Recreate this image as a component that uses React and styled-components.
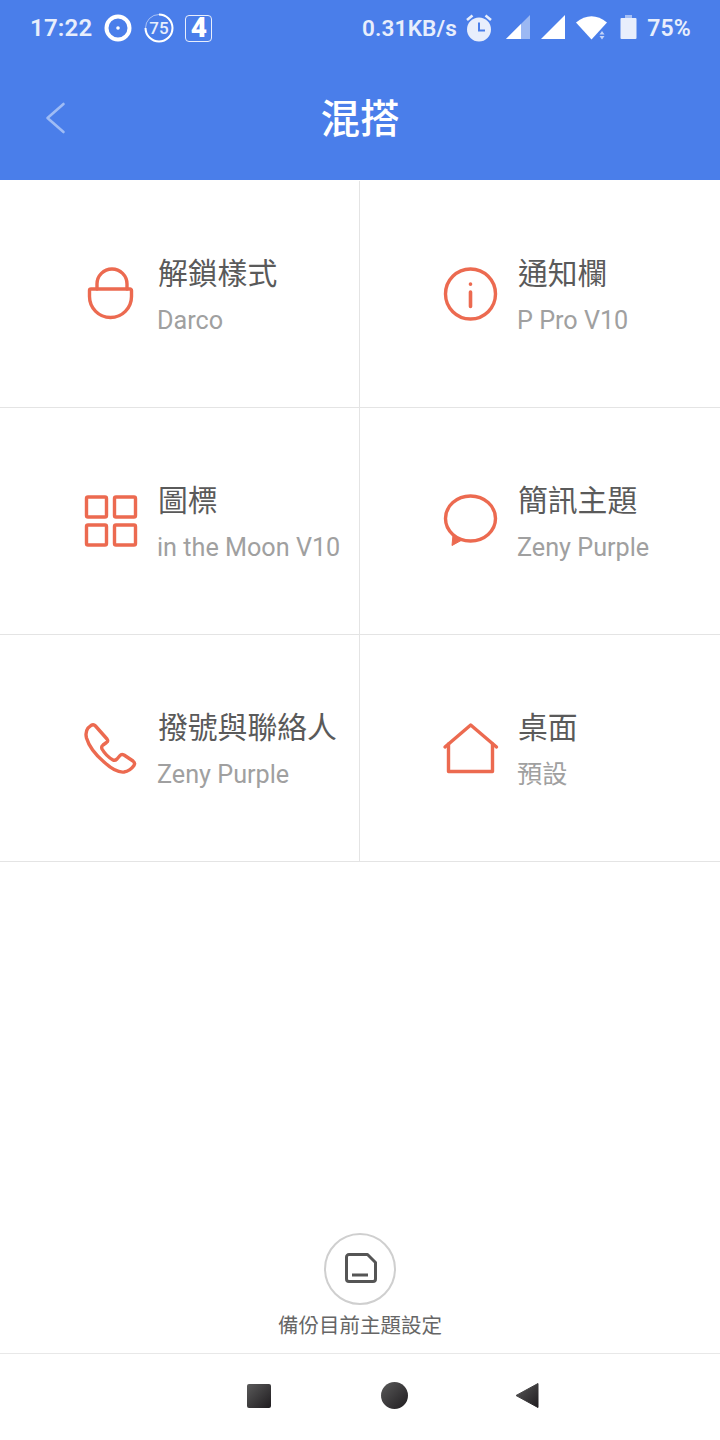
import styled, { createGlobalStyle } from "styled-components";

const GlobalStyle = createGlobalStyle`
  html, body {
    margin: 0;
    padding: 0;
    background: #fff;
  }
`;

const Page = styled.div`
  display: flex;
  flex-direction: column;
  width: 720px;
  height: 1440px;
  overflow: hidden;
  background: #fff;
  font-family: Roboto, "Noto Sans CJK TC", sans-serif;
`;

const Header = styled.header`
  height: 180px;
  background: #4a7eea;
  color: #fff;
`;

const StatusBar = styled.div`
  display: flex;
  justify-content: space-between;
  align-items: center;
  height: 56px;
  padding: 0 29px 0 30px;
  color: #e8eefc;
  font-weight: 600;
`;

const StatusGroup = styled.div`
  display: flex;
  align-items: center;
  gap: ${(p) => p.$gap}px;
`;

const StatusText = styled.span`
  margin-right: ${(p) => p.$pull || 0}px;
  font-size: ${(p) => p.$size}px;
  letter-spacing: 0.2px;
`;

const NumberBox = styled.span`
  display: flex;
  align-items: center;
  justify-content: center;
  box-sizing: border-box;
  width: 27px;
  height: 27px;
  margin-left: -1px;
  border: 1.5px solid #e8eefc;
  border-radius: 4px;
  font-size: 28px;
  font-weight: 900;
  line-height: 1;
  color: #fff;
`;

const TitleBar = styled.div`
  display: grid;
  grid-template-columns: 1fr auto 1fr;
  align-items: center;
  height: 124px;
  padding-left: 44px;
`;

const Title = styled.h1`
  margin: 0 0 5px -44px;
  font-family: "Noto Sans CJK TC", sans-serif;
  font-size: 39.5px;
  font-weight: 500;
  line-height: 1;
`;

const Grid = styled.div`
  display: grid;
  grid-template-columns: 360px 360px;
  grid-auto-rows: 227px;
  padding-top: 1px;
`;

const Cell = styled.div`
  display: flex;
  align-items: center;
  gap: 18px;
  box-sizing: border-box;
  padding-left: 80px;
  border-bottom: 1px solid #e4e4e4;
  border-right: ${(p) => (p.$left ? "1px solid #e4e4e4" : "none")};
`;

const CellText = styled.div`
  display: flex;
  flex-direction: column;
  gap: 13px;
  padding-top: 2px;
  white-space: nowrap;
`;

const CellTitle = styled.div`
  font-family: "Noto Sans CJK TC", sans-serif;
  font-size: 29.8px;
  line-height: 38px;
  color: #5a5a5a;
`;

const CellSub = styled.div`
  margin-left: -1px;
  font-family: Roboto, "Noto Sans CJK TC", sans-serif;
  font-size: 25.2px;
  line-height: 36px;
  color: #a0a0a0;
`;

const Backup = styled.div`
  display: flex;
  flex-direction: column;
  align-items: center;
  gap: 4px;
  margin-top: auto;
  padding-bottom: 14px;
`;

const BackupButton = styled.button`
  display: flex;
  align-items: center;
  justify-content: center;
  box-sizing: border-box;
  width: 72px;
  height: 72px;
  padding: 0;
  border: 2px solid #cfcfcf;
  border-radius: 50%;
  background: #fff;
`;

const BackupLabel = styled.div`
  font-family: "Noto Sans CJK TC", sans-serif;
  font-size: 20.5px;
  line-height: 30px;
  color: #666;
`;

const NavBar = styled.nav`
  display: grid;
  grid-template-columns: repeat(3, 134px);
  align-items: center;
  box-sizing: border-box;
  height: 87px;
  padding: 0 0 3px 247px;
  border-top: 1px solid #e8e8e8;
`;

const LineIcon = styled.svg`
  flex: none;
  width: 60px;
  height: 60px;
  fill: none;
  stroke: #ec6a50;
  stroke-width: 3.4;
  stroke-linecap: round;
  stroke-linejoin: round;
`;

const LockIcon = () => (
  <LineIcon viewBox="0 0 60 60">
    <path d="M17 25V20A15 15 0 0 1 47 20V25" />
    <path d="M11 25H50A1.5 1.5 0 0 1 51.5 26.5V32.5A21 21 0 0 1 30.5 53.5A21 21 0 0 1 9.5 32.5V26.5A1.5 1.5 0 0 1 11 25Z" />
  </LineIcon>
);

const InfoIcon = () => (
  <LineIcon viewBox="0 0 60 60">
    <circle cx="30.5" cy="30" r="25" />
    <path d="M30.5 20V20.2M30.5 28V42.5" strokeWidth="3.6" />
  </LineIcon>
);

const GridIcon = () => (
  <LineIcon viewBox="0 0 60 60">
    <rect x="6.5" y="6" width="20" height="20" rx="1.5" />
    <rect x="34.5" y="6" width="21" height="20" rx="1.5" />
    <rect x="6.5" y="34" width="20" height="20" rx="1.5" />
    <rect x="34.5" y="34" width="21" height="20" rx="1.5" />
  </LineIcon>
);

const BubbleIcon = () => (
  <LineIcon viewBox="0 0 60 60">
    <ellipse cx="30.5" cy="27.5" rx="25" ry="22.5" />
    <path d="M13 44L12 54.5L22 49Z" fill="#ec6a50" strokeWidth="1" />
  </LineIcon>
);

const PhoneIcon = () => (
  <LineIcon viewBox="0 0 60 60">
    <path d="M8 10L11 7.5Q13.5 5.8 15.5 8L27 21Q28.5 23 26.5 24.5L23 27Q21 28.5 22 31Q26 38 33 42Q35 43 37 41L40 37.5Q41.5 35.8 44 37L53 43Q55.5 45 54 47.5Q50 53 44 54Q36 55 24 44Q10 32 6.5 20Q5 14 8 10Z" />
  </LineIcon>
);

const HomeIcon = () => (
  <LineIcon viewBox="0 0 60 60">
    <path d="M5 29L30.7 7L56.5 29" />
    <path d="M8.5 26V53.5H52.5V26" />
  </LineIcon>
);

const TargetIcon = () => (
  <svg width="28" height="28" viewBox="0 0 28 28">
    <circle cx="14" cy="14" r="11.5" fill="none" stroke="#fff" strokeWidth="4" />
    <circle cx="14" cy="14" r="1.8" fill="#fff" />
  </svg>
);

const RingIcon = () => (
  <svg width="30" height="30" viewBox="0 0 30 30">
    <circle cx="15" cy="15" r="13.5" fill="none" stroke="#e8eefc" strokeWidth="1" opacity="0.6" />
    <path d="M15 1.5A13.5 13.5 0 1 1 1.5 15" fill="none" stroke="#fff" strokeWidth="2" />
    <text x="15" y="21" textAnchor="middle" fontSize="17" fontFamily="Roboto" fontWeight="500" fill="#e8eefc">
      75
    </text>
  </svg>
);

const AlarmIcon = () => (
  <svg width="31" height="30" viewBox="0 0 31 30">
    <circle cx="14" cy="16.5" r="12" fill="#e8eefc" />
    <path d="M14 9.5V17.5H20" fill="none" stroke="#4a7eea" strokeWidth="2" />
    <path d="M2 7L7.5 2.5M26 7L20.5 2.5" stroke="#e8eefc" strokeWidth="2.6" />
  </svg>
);

const SignalIcon = ({ weak }) => (
  <svg width="25" height="26" viewBox="0 0 25 26">
    <path d="M0 24L24 0V24Z" fill="#fff" opacity={weak ? 0.45 : 1} />
    {weak && <path d="M0 24L15 9V24Z" fill="#fff" />}
  </svg>
);

const WifiIcon = () => (
  <svg width="34" height="26" viewBox="0 0 34 26">
    <path d="M0 7.5Q15.5 -5 31 7.5L15.5 24.5Z" fill="#fff" />
    <path d="M26 16L28.5 19.5H23.5ZM26 24.5L23.5 21H28.5Z" fill="#c4d4f8" />
  </svg>
);

const BatteryIcon = () => (
  <svg width="17" height="26" viewBox="0 0 17 26">
    <path d="M5 0H12V3H5Z" fill="#fff" opacity="0.5" />
    <rect x="0.5" y="3" width="16" height="21" rx="1" fill="#e8eefc" />
  </svg>
);

const BackIcon = () => (
  <svg width="22" height="32" viewBox="0 0 22 32">
    <path d="M19.5 2L3.5 16L19.5 30" fill="none" stroke="#9fbcf5" strokeWidth="2.6" strokeLinecap="round" strokeLinejoin="round" />
  </svg>
);

const SimIcon = () => (
  <svg width="36" height="36" viewBox="0 0 36 36">
    <path
      d="M7 3.5H25.5L33.5 11.5V28A2.5 2.5 0 0 1 31 30.5H7A2.5 2.5 0 0 1 4.5 28V6A2.5 2.5 0 0 1 7 3.5Z"
      fill="none"
      stroke="#555"
      strokeWidth="3"
      strokeLinejoin="round"
    />
    <path d="M10 24H26" stroke="#555" strokeWidth="3" />
  </svg>
);

const NavGradient = ({ id }) => (
  <defs>
    <linearGradient id={id} x1="0" y1="0" x2="1" y2="1">
      <stop offset="0" stopColor="#5a5a5a" />
      <stop offset="1" stopColor="#1f1c1f" />
    </linearGradient>
  </defs>
);

const NavSquare = () => (
  <svg width="24" height="24" viewBox="0 0 24 24">
    <NavGradient id="navSquare" />
    <rect width="24" height="24" rx="2" fill="url(#navSquare)" />
  </svg>
);

const NavCircle = () => (
  <svg width="27" height="27" viewBox="0 0 27 27">
    <NavGradient id="navCircle" />
    <circle cx="13.5" cy="13.5" r="13.5" fill="url(#navCircle)" />
  </svg>
);

const NavBack = () => (
  <svg width="24" height="27" viewBox="0 0 24 27">
    <NavGradient id="navBack" />
    <path d="M23 1.5V25.5L1 13.5Z" fill="url(#navBack)" stroke="url(#navBack)" strokeWidth="1" strokeLinejoin="round" />
  </svg>
);

const items = [
  { title: "解鎖樣式", sub: "Darco", icon: <LockIcon /> },
  { title: "通知欄", sub: "P Pro V10", icon: <InfoIcon /> },
  { title: "圖標", sub: "in the Moon V10", icon: <GridIcon /> },
  { title: "簡訊主題", sub: "Zeny Purple", icon: <BubbleIcon /> },
  { title: "撥號與聯絡人", sub: "Zeny Purple", icon: <PhoneIcon /> },
  { title: "桌面", sub: "預設", icon: <HomeIcon /> },
];

export default function App() {
  return (
    <Page>
      <GlobalStyle />
      <Header>
        <StatusBar>
          <StatusGroup $gap={12}>
            <StatusText $size={24}>17:22</StatusText>
            <TargetIcon />
            <RingIcon />
            <NumberBox>4</NumberBox>
          </StatusGroup>
          <StatusGroup $gap={10}>
            <StatusText $size={22.5} $pull={-2}>0.31KB/s</StatusText>
            <AlarmIcon />
            <SignalIcon weak />
            <SignalIcon />
            <WifiIcon />
            <BatteryIcon />
            <StatusText $size={23}>75%</StatusText>
          </StatusGroup>
        </StatusBar>
        <TitleBar>
          <BackIcon />
          <Title>混搭</Title>
        </TitleBar>
      </Header>
      <Grid>
        {items.map((item, i) => (
          <Cell key={item.title} $left={i % 2 === 0}>
            {item.icon}
            <CellText>
              <CellTitle>{item.title}</CellTitle>
              <CellSub>{item.sub}</CellSub>
            </CellText>
          </Cell>
        ))}
      </Grid>
      <Backup>
        <BackupButton>
          <SimIcon />
        </BackupButton>
        <BackupLabel>備份目前主題設定</BackupLabel>
      </Backup>
      <NavBar>
        <NavSquare />
        <NavCircle />
        <NavBack />
      </NavBar>
    </Page>
  );
}
